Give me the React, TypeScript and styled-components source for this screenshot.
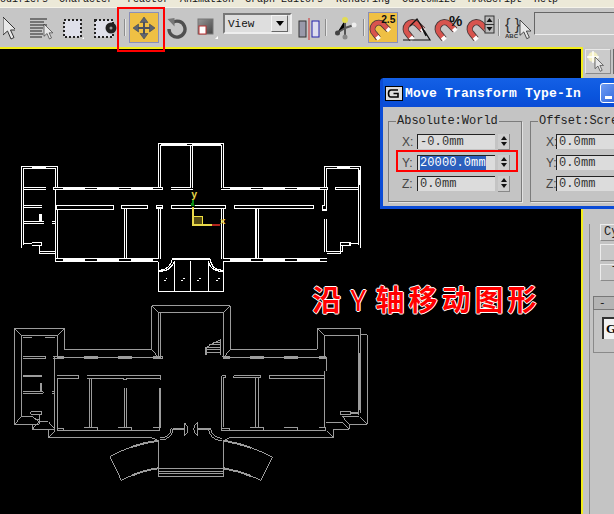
import React from 'react'
import styled, { createGlobalStyle } from 'styled-components'

const Global = createGlobalStyle`
  html, body { margin: 0; padding: 0; background: #000; }
`

const Window = styled.div`
  position: relative;
  width: 614px;
  height: 514px;
  overflow: hidden;
  display: flex;
  flex-direction: column;
  background: #c4c4c4;
  font-family: "Liberation Mono", monospace;
`

const MenuBar = styled.div`
  height: 7px;
  flex: none;
  display: flex;
  overflow: hidden;
  background: #ece9d8;
  border-bottom: 1px solid #f6f4ea;
`

const MenuItem = styled.span<{ $w: number }>`
  width: ${(p) => p.$w}px;
  flex: none;
  margin-top: -6px;
  font-size: 10px;
  line-height: 12px;
  color: #111;
  white-space: pre;
`

const Toolbar = styled.div`
  height: 39px;
  flex: none;
  display: flex;
  align-items: center;
  background: #c6c6c6;
`

const Slot = styled.div<{ $w: number; $ml?: number }>`
  width: ${(p) => p.$w}px;
  margin-left: ${(p) => p.$ml ?? 0}px;
  flex: none;
  display: flex;
  align-items: center;
  justify-content: center;
`

const ActiveSlot = styled(Slot)`
  height: 31px;
  box-sizing: border-box;
  background: #efc044;
  border: 1px solid #8b8fb8;
`

const Sep = styled.div<{ $ml: number }>`
  width: 1px;
  height: 17px;
  margin-left: ${(p) => p.$ml}px;
  flex: none;
  background: #8c8c8c;
  border-right: 1px solid #e6e6e6;
`

const ViewSelect = styled.div`
  width: 69px;
  height: 21px;
  margin: 0 0 8px 5px;
  flex: none;
  box-sizing: border-box;
  display: flex;
  align-items: center;
  justify-content: space-between;
  padding: 0 2px 0 3px;
  background: #dedede;
  border: 2px solid;
  border-color: #777 #eee #eee #777;
  font-size: 11px;
  color: #111;
`

const ArrowButton = styled.div`
  width: 15px;
  height: 15px;
  display: flex;
  align-items: center;
  justify-content: center;
  background: #ddd;
  border: 1px solid;
  border-color: #f4f4f4 #666 #666 #f4f4f4;
  &::after {
    content: '';
    border: 4px solid transparent;
    border-top: 5px solid #000;
    border-bottom: 0;
  }
`

const NameInput = styled.div`
  width: 90px;
  height: 21px;
  margin: 0 0 8px 3px;
  flex: none;
  background: #c9c9c9;
  border: 1px solid;
  border-color: #666 #eee #eee #666;
`

const Main = styled.div`
  flex: 1;
  min-height: 0;
  display: flex;
`

const Viewport = styled.div`
  position: relative;
  width: 581px;
  flex: none;
  box-sizing: content-box;
  background: #000;
  border-top: 2px solid #f3ee1c;
  border-right: 2px solid #f3ee1c;
`

const PlanCanvas = styled.svg`
  display: block;
  width: 581px;
  height: 465px;
`

const Panel = styled.aside`
  position: relative;
  flex: 1;
  display: flex;
  flex-direction: column;
  background: #c4c4c4;
`

const PanelTab = styled.div`
  width: 24px;
  height: 23px;
  margin: 2px 0 0 2px;
  display: flex;
  align-items: center;
  justify-content: center;
  background: #cbcbcb;
  border: 1px solid;
  border-color: #e8e8e8 #8a8a8a #8a8a8a #e8e8e8;
  box-shadow: 2px 0 0 #c4c4c4, 3px 0 0 #666;
`

const PanelBody = styled.div`
  margin: 150px 0 0 6px;
  flex: 1;
  display: flex;
  flex-direction: column;
  border-left: 1px solid #8a8a8a;
  padding-left: 3px;
`

const PanelButton = styled.div<{ $mb?: number; $pl?: number }>`
  width: 24px;
  height: 17px;
  margin: 0 0 ${(p) => p.$mb ?? 3}px 7px;
  box-sizing: border-box;
  padding-left: ${(p) => p.$pl ?? 3}px;
  background: #c8c8c8;
  border: 1px solid;
  border-color: #ececec #8a8a8a #8a8a8a #ececec;
  font-size: 12px;
  line-height: 15px;
  color: #222;
`

const RolloutBar = styled.div`
  height: 14px;
  margin: 15px 0 0 0;
  box-sizing: border-box;
  padding-left: 5px;
  background: #b4b4b4;
  border: 1px solid #777;
  border-right: 0;
  font-size: 11px;
  line-height: 12px;
  color: #111;
`

const RolloutGroup = styled.div`
  height: 35px;
  padding: 7px 0 0 8px;
  border: 1px solid #8a8a8a;
  border-right: 0;
  border-top: 0;
`

const GroupField = styled.div`
  height: 20px;
  padding-left: 2px;
  background: #f2f2f2;
  border-left: 2px solid #333;
  border-top: 2px solid #333;
  font: bold 13px/19px "Liberation Serif", serif;
  color: #000;
  overflow: hidden;
`

const Dialog = styled.section`
  position: absolute;
  left: 380px;
  top: 78px;
  width: 300px;
  height: 131px;
  box-sizing: border-box;
  border-radius: 4px 4px 0 0;
  background: #0a4bd6;
  padding: 0 3px 3px;
  display: flex;
  flex-direction: column;
`

const TitleBar = styled.header`
  height: 28px;
  flex: none;
  display: flex;
  align-items: center;
  gap: 2px;
  padding: 1px 0 0 2px;
  background: linear-gradient(#1460e6, #0a55dd 60%, #0a4bd6);
  color: #fff;
  font: bold 13px "Liberation Mono", monospace;
  letter-spacing: 0.2px;
  white-space: pre;
`

const MinimizeButton = styled.div`
  width: 22px;
  height: 20px;
  margin-left: 17px;
  flex: none;
  box-sizing: border-box;
  display: flex;
  align-items: flex-end;
  padding: 0 0 3px 4px;
  border: 1px solid #fff;
  border-radius: 3px;
  background: linear-gradient(135deg, #6f9df2, #2a62dc);
  &::after {
    content: '';
    width: 7px;
    height: 3px;
    background: #fff;
  }
`

const DialogBody = styled.div`
  flex: 1;
  display: flex;
  align-items: flex-start;
  gap: 8px;
  padding: 8px 0 0 5px;
  background: #c4c4c4;
`

const Group = styled.fieldset<{ $w: number }>`
  width: ${(p) => p.$w}px;
  flex: none;
  box-sizing: border-box;
  margin: 0;
  padding: 6px 0 10px;
  display: flex;
  flex-direction: column;
  gap: 6px;
  border: 1px solid #7c7c7c;
  box-shadow: 1px 1px 0 #e2e2e2;
`

const GroupTitle = styled.legend`
  margin-left: 7px;
  padding: 0 1px;
  font-size: 12px;
  line-height: 13px;
  color: #222;
`

const Row = styled.div<{ $pl: number }>`
  height: 15px;
  padding-left: ${(p) => p.$pl}px;
  display: flex;
  align-items: center;
`

const AxisLabel = styled.label<{ $w: number }>`
  width: ${(p) => p.$w}px;
  flex: none;
  font: 12px "Liberation Sans", sans-serif;
  color: #444;
`

const ValueField = styled.div`
  width: 78px;
  height: 15px;
  flex: none;
  box-sizing: border-box;
  display: flex;
  align-items: center;
  padding-left: 2px;
  background: #dcdcdc;
  border-left: 1px solid #222;
  border-top: 1px solid #222;
  font-size: 12px;
  color: #333;
  letter-spacing: 0.1px;
`

const Selected = styled.span`
  background: #2c60bd;
  color: #fff;
`

const Spinner = styled.div`
  width: 11px;
  height: 15px;
  margin-left: 3px;
  flex: none;
  display: flex;
  flex-direction: column;
  align-items: center;
  justify-content: center;
  gap: 2px;
  background: #cdcdcd;
  border-right: 1px solid #888;
  border-bottom: 1px solid #888;
`

const Tri = styled.i<{ $up?: boolean }>`
  width: 0;
  height: 0;
  border-left: 3px solid transparent;
  border-right: 3px solid transparent;
  ${(p) => (p.$up ? 'border-bottom: 4px solid #111;' : 'border-top: 4px solid #111;')}
`

const RedBox = styled.div<{ $x: number; $y: number; $w: number; $h: number }>`
  position: absolute;
  left: ${(p) => p.$x}px;
  top: ${(p) => p.$y}px;
  width: ${(p) => p.$w}px;
  height: ${(p) => p.$h}px;
  box-sizing: border-box;
  border: 2px solid #f00;
  pointer-events: none;
`

const Caption = styled.div`
  position: absolute;
  left: 312px;
  top: 232px;
  font: bold 29px/34px "Noto Sans CJK SC", sans-serif;
  letter-spacing: 4px;
  word-spacing: -5px;
  color: #f00;
  white-space: pre;
  text-shadow: 1px 0 0 #fff, -1px 0 0 #fff, 0 1px 0 #fff, 0 -1px 0 #fff;
`

const CaptionLatin = styled.span`
  font-weight: 400;
`

const Cursor = ({ x = 0, y = 0, s = 1 }: { x?: number; y?: number; s?: number }) => (
  <g transform={`translate(${x} ${y}) scale(${s})`}>
    <path d="M0 0V18L4.5 14 8 22 11 20.5 7.5 13H13Z" fill="#e8e8e8" stroke="#333" strokeWidth="1" />
  </g>
)

const MAGNET_PATH = 'M9 24L5 19A6.5 6.5 0 0 1 14 9L20 15'

const Magnet = ({ x = 0, y = 0 }: { x?: number; y?: number }) => (
  <g transform={`translate(${x} ${y})`} fill="none">
    <path d={MAGNET_PATH} stroke="#4a3a3a" strokeWidth="6.4" />
    <path d={MAGNET_PATH} stroke="#d8544e" strokeWidth="4.6" />
    <path d="M7.5 22L10 25M18.5 13.5L21 16" stroke="#fff" strokeWidth="4.4" />
  </g>
)

const SelectIcon = () => (
  <svg width="12" height="24" viewBox="0 0 12 24"><Cursor y={1} /></svg>
)

const SelectByNameIcon = () => (
  <svg width="24" height="24" viewBox="0 0 24 24">
    <path d="M0 3H17M0 6H14M0 9H17M0 12H13M0 15H12M0 18H13M0 21H12" stroke="#222" strokeWidth="1" />
    <Cursor x={14} y={8} s={0.68} />
  </svg>
)

const RegionIcon = () => (
  <svg width="24" height="24" viewBox="0 0 24 24">
    <rect x="4" y="4" width="17" height="17" fill="#dfe0ea" stroke="#222" strokeWidth="2" strokeDasharray="2 2" />
    <path d="M22 23h2v-2z" fill="#fff" />
  </svg>
)

const CrossingIcon = () => (
  <svg width="24" height="24" viewBox="0 0 24 24">
    <rect x="2" y="4" width="18" height="17" fill="#dfe0ea" stroke="#222" strokeWidth="2" strokeDasharray="2 2" />
    <circle cx="18" cy="12" r="5.5" fill="#222" />
    <circle cx="18" cy="12" r="1.5" fill="#999" />
  </svg>
)

const MoveIcon = () => (
  <svg width="24" height="24" viewBox="0 0 24 24">
    <path d="M12 5V19M5 12H19" stroke="#4a5060" strokeWidth="2" />
    <path d="M12 1L16 6.5H8ZM12 23L8 17.5H16ZM1 12L6.5 8V16ZM23 12L17.5 16V8Z" fill="#5e6470" stroke="#3f4654" strokeWidth=".6" />
  </svg>
)

const RotateIcon = () => (
  <svg width="21" height="22" viewBox="0 0 21 22">
    <path d="M6.5 5.5A8 8 0 1 1 3 12" fill="none" stroke="#4f4f4f" strokeWidth="3.4" />
    <path d="M1.5 2L8.5 1V9.5Z" fill="#777" />
  </svg>
)

const ScaleIcon = () => (
  <svg width="22" height="24" viewBox="0 0 22 24">
    <defs>
      <linearGradient id="scaleFill" x1="0" y1="0" x2="1" y2="1">
        <stop offset="0" stopColor="#999" />
        <stop offset="1" stopColor="#444" />
      </linearGradient>
    </defs>
    <rect x="2" y="3" width="15" height="15" fill="url(#scaleFill)" stroke="#777" />
    <rect x="3" y="10" width="7" height="8" fill="#fff" stroke="#b33" />
    <path d="M19 23h3v-3z" fill="#fff" />
  </svg>
)

const MirrorIcon = () => (
  <svg width="24" height="24" viewBox="0 0 24 24">
    <rect x="1" y="5" width="7" height="16" fill="#99a" stroke="#333" />
    <path d="M11 2V24" stroke="#c33" strokeWidth="1" />
    <rect x="14" y="5" width="7" height="16" fill="#dde" stroke="#22a" />
  </svg>
)

const AxisIcon = () => (
  <svg width="22" height="24" viewBox="0 0 22 24">
    <path d="M10 4L10 12 2 17M10 12L19 9M10 12V20" stroke="#555" strokeWidth="2" />
    <circle cx="10" cy="4" r="3" fill="#e3dc53" />
    <circle cx="2.5" cy="17" r="2.5" fill="#444" />
    <circle cx="19" cy="9" r="2.5" fill="#eee" />
    <circle cx="10" cy="21" r="2.5" fill="#888" />
  </svg>
)

const SnapIcon = ({ kind }: { kind: 'value' | 'angle' | 'percent' | 'spin' }) => (
  <svg width="30" height="30" viewBox="0 0 30 30">
    <Magnet x={1} y={2} />
    {kind === 'value' && <text x="13" y="10" fontFamily="Liberation Sans" fontWeight="700" fontSize="11" fill="#111">2.5</text>}
    {kind === 'angle' && <path d="M1 27H28L15 6 8 13M20 15l4 8" fill="none" stroke="#111" strokeWidth="1.2" />}
    {kind === 'percent' && <text x="15" y="13" fontFamily="Liberation Sans" fontWeight="700" fontSize="15" fill="#111">%</text>}
    {kind === 'spin' && (
      <g>
        <rect x="19" y="3" width="9" height="17" fill="#bbb" stroke="#333" />
        <path d="M20.5 9L23.5 5 26.5 9ZM20.5 14L23.5 18 26.5 14Z" fill="#111" />
        <path d="M19 11.5H28" stroke="#333" />
      </g>
    )}
  </svg>
)

const NamedSetIcon = () => (
  <svg width="26" height="30" viewBox="0 0 26 30">
    <text x="0" y="17" fontFamily="Liberation Sans" fontSize="16" fill="#333">{'{ }'}</text>
    <text x="0" y="25" fontFamily="Liberation Sans" fontWeight="700" fontSize="6" fill="#333">ABC</text>
    <Cursor x={15} y={7} s={0.85} />
  </svg>
)

const StarCursorIcon = () => (
  <svg width="22" height="22" viewBox="0 0 22 22">
    <circle cx="6" cy="6" r="5" fill="#fdf7c0" opacity=".8" />
    <path d="M6 0V12M0 6H12" stroke="#fff" strokeWidth="1.4" />
    <Cursor x={8} y={6} s={0.65} />
  </svg>
)

const upperWhite = [
  'M445 158V26H640V158M452 158V32H634V158M452 29H530M548 29H634',
  'M542 32V158M548 26V158',
  'M34 338V95H143V158M40 330V100H137V158M66 97H108',
  'M130 157H445M130 163H458V157H445M484 157H542M484 163H548',
  'M640 157H952M634 163H952V157M976 157H1046M976 163H1046',
  'M944 158V95H1052V338M950 158V100H1046V330M980 97H1020M1049 105V150',
  'M138 211H311V223H138ZM142 223V370M334 211H413V221H334ZM344 221V370M350 221V370',
  'M439 211H458V219H439ZM446 219V372M452 219V372M484 211H647V221H484ZM634 221V372M640 221V372',
  'M673 211H911V221H673ZM738 221V370M745 221V370',
  'M944 163V211H937V225H950M950 163V228M944 253V350M950 253V350',
  'M137 163V380M130 157V163',
  'M137 370H445M137 380H445M640 370H950M640 380H950M160 375H225M262 375H327M364 375H428M660 375H722M760 375H824M862 375H930',
  'M160 160H225M262 160H327M364 160H428M660 160H722M760 160H824M862 160H930',
  'M445 380V470H640V380M493 378V470M541 378V470M595 378V470M485 372H600',
  'M445 406Q480 406 487 372M445 410Q485 408 493 378M640 406Q605 406 600 372M640 410Q600 408 595 378',
  'M40 157H107M40 163H107M40 211H95M40 217H95M40 260H101M40 265H101M90 238V258M95 238V258',
  'M40 325H65M65 322H95V331H65M88 331V350H137M94 356H137M88 331V356H94M125 260H137V266H125',
  'M991 322H1020V331H991ZM1020 325H1046M998 331V350H950M992 331V356H950M976 157V163',
]

const upperTicks = [
  'M463 438L472 428M515 438L524 428M563 438L572 428M620 438L629 428',
]

const lowerGray = [
  'M455 165V32H691V165M476 187V53H670V187M455 32L476 53M691 32L670 53M455 165L476 187M691 165L670 187M482 187V53',
  'M193 163V100H43V388H97V403H145V428H455M193 163H455M65 122H172V187M65 122V365M43 100L65 122M193 100L172 122M43 388L65 365',
  'M65 365H97L118 380V388H97M118 380H145L165 403H145M97 403L118 380M145 428L165 407',
  'M172 187H482M172 192H192M253 184H293V192H253M355 184H395V192H355M458 184H488V192H458M160 184H192V192H160',
  'M691 163H952V100H1082V120H1102V388H1048V403H1000V428H690M952 100L973 122M973 122H1076V360M1082 120V355M973 122V187',
  'M670 187H978M670 192H690M750 184H790V192H750M852 184H892V192H852M958 184H978V192H958M665 184H688V192',
  'M1102 388L1080 365M1048 403L1027 382M1000 428L979 407M1027 382H979M1048 388L1027 365H1076M1021 349H1052V358H1021Z',
  'M165 187V407M172 250V400M172 243H236V250H172M262 243H482V255M262 250H372V255H380V250H482M268 250V397M274 250V397M374 280V397M380 280V397',
  'M172 400H192V407H172M253 397H293V407H253M355 397H395V407H355M458 397H480V407M172 407H480M172 400V407',
  'M665 243H677V248H670V397M665 243V407M702 242H782V249H702ZM766 249V397M777 249V397M808 243H975V250H808ZM975 228V397M979 228V203M750 397H790V407H750M852 397H892V407H852M958 397H978V407H958',
  'M665 400H688V407H665M670 407H978M979 187V203',
  'M480 435Q515 435 520 400M480 428Q510 428 514 400M665 437Q630 435 625 400M665 430Q636 428 632 400',
  'M553 383V422M593 380V422M553 383Q575 403 553 422M593 380Q570 403 593 422',
  'M475 435V545H671V435M475 520H671M475 530H671M475 537H671',
  'M475 437Q395 448 330 485L364 556Q420 527 475 520M671 437Q750 450 817 487L782 556Q730 530 671 520M455 428L475 437M690 428L671 437',
  'M70 184H137V191H70M70 122H97M135 122H165M135 127H165M70 127H97',
  'M70 290H130V295H70M65 280V290M93 350H125V358H93ZM155 290H165V296H155M118 358V380M105 375H118',
  'M616 158L662 134V180M616 158H662M622 165H662M622 172H662M628 150H662M640 142H662',
]

const lowerBold = [
  'M70 243H125M122 265V290M480 280V400M520 403H553M595 403H630M618 158V180M1076 175V345M1052 354H1075',
]

// the wing arcs are heavy only near the entrance, the dash cuts them off there
const lowerArcs = [
  'M475 437Q395 448 330 485',
  'M475 520Q420 527 364 556',
  'M671 437Q750 450 817 487',
  'M671 520Q730 530 782 556',
]

const FloorPlans = () => (
  <PlanCanvas viewBox="0 0 581 465">
    <g transform="translate(10 86) scale(.33333)" fill="none" stroke="#fff" strokeWidth="3.2" shapeRendering="crispEdges">
      {upperWhite.map((d) => <path key={d} d={d} />)}
      {upperTicks.map((d) => <path key={d} d={d} strokeWidth="4" strokeDasharray="5 3" />)}
      <rect x="550" y="244" width="28" height="28" fill="#544a12" stroke="#f0e040" />
      <path d="M549 215V270H605" stroke="#e9d84a" />
      <path d="M605 270H630" stroke="#b3261e" strokeWidth="4" />
      <path d="M549 196L544 212H552Z" fill="#0a8a12" stroke="#0a8a12" />
      <text x="544" y="190" fontFamily="Liberation Mono" fontWeight="700" fontSize="30" fill="#e9d84a" stroke="none">y</text>
      <text x="630" y="268" fontFamily="Liberation Mono" fontWeight="700" fontSize="28" fill="#e9d84a" stroke="none">x</text>
    </g>
    <g transform="translate(0 246) scale(.33333)" fill="none" stroke="#9c9c9c" strokeWidth="3" shapeRendering="crispEdges">
      {lowerGray.map((d) => <path key={d} d={d} />)}
      {lowerBold.map((d) => <path key={d} d={d} strokeWidth="6" />)}
      {lowerArcs.map((d) => <path key={d} d={d} strokeWidth="6" strokeDasharray="85 400" />)}
    </g>
  </PlanCanvas>
)

const axisRows = (values: React.ReactNode[], indent: number, labelWidth: number) =>
  ['X', 'Y', 'Z'].map((axis, i) => (
    <Row key={axis} $pl={indent}>
      <AxisLabel $w={labelWidth}>{axis}:</AxisLabel>
      <ValueField>{values[i]}</ValueField>
      <Spinner>
        <Tri $up />
        <Tri />
      </Spinner>
    </Row>
  ))

const menus: [string, number][] = [
  ['odifiers', 59],
  ['Character', 68],
  ['reactor', 53],
  ['Animation', 65],
  ['Graph Editors', 91],
  ['Rendering', 66],
  ['Customize', 66],
  ['MAXScript', 66],
  ['Help', 80],
]

const App = () => (
  <Window>
    <Global />
    <MenuBar>
      {menus.map(([name, w]) => <MenuItem key={name} $w={w}>{name}</MenuItem>)}
    </MenuBar>
    <Toolbar>
      <Slot $w={12} $ml={3}><SelectIcon /></Slot>
      <Slot $w={24} $ml={15}><SelectByNameIcon /></Slot>
      <Slot $w={24} $ml={6}><RegionIcon /></Slot>
      <Slot $w={24} $ml={9}><CrossingIcon /></Slot>
      <Sep $ml={7} />
      <ActiveSlot $w={30} $ml={3}><MoveIcon /></ActiveSlot>
      <Slot $w={21} $ml={7}><RotateIcon /></Slot>
      <Slot $w={22} $ml={9}><ScaleIcon /></Slot>
      <ViewSelect>View<ArrowButton /></ViewSelect>
      <Slot $w={24} $ml={6}><MirrorIcon /></Slot>
      <Sep $ml={3} />
      <Slot $w={22} $ml={8}><AxisIcon /></Slot>
      <Sep $ml={6} />
      <ActiveSlot $w={30} $ml={3}><SnapIcon kind="value" /></ActiveSlot>
      <Slot $w={30} $ml={4}><SnapIcon kind="angle" /></Slot>
      <Slot $w={30} $ml={2}><SnapIcon kind="percent" /></Slot>
      <Slot $w={30} $ml={2}><SnapIcon kind="spin" /></Slot>
      <Sep $ml={2} />
      <Slot $w={26} $ml={5}><NamedSetIcon /></Slot>
      <NameInput />
    </Toolbar>
    <Main>
      <Viewport>
        <FloorPlans />
        <Caption>沿 <CaptionLatin>Y</CaptionLatin> 轴移动图形</Caption>
      </Viewport>
      <Panel>
        <PanelTab><StarCursorIcon /></PanelTab>
        <PanelBody>
          <PanelButton>Cy</PanelButton>
          <PanelButton />
          <PanelButton $mb={0} $pl={11}>T</PanelButton>
          <RolloutBar>-</RolloutBar>
          <RolloutGroup><GroupField>Gr</GroupField></RolloutGroup>
        </PanelBody>
      </Panel>
    </Main>
    <RedBox $x={117} $y={7} $w={48} $h={45} />
    <Dialog>
      <TitleBar>
        <svg width="18" height="15" viewBox="0 0 18 15">
          <rect x=".5" y=".5" width="17" height="14" fill="#ddd" stroke="#000" />
          <path d="M13 4H6Q3.5 4 3.5 7.5T6 11H13V7.5H8.5" fill="none" stroke="#000" strokeWidth="1.6" />
        </svg>
        Move Transform Type-In
        <MinimizeButton />
      </TitleBar>
      <DialogBody>
        <Group $w={134}>
          <GroupTitle>Absolute:World</GroupTitle>
          {axisRows(['-0.0mm', <Selected key="y">20000.0mm</Selected>, '0.0mm'], 13, 15)}
        </Group>
        <Group $w={170}>
          <GroupTitle>Offset:Screen</GroupTitle>
          {axisRows(['0.0mm', '0.0mm', '0.0mm'], 15, 10)}
        </Group>
      </DialogBody>
    </Dialog>
    <RedBox $x={396} $y={150} $w={122} $h={22} />
  </Window>
)

export default App
